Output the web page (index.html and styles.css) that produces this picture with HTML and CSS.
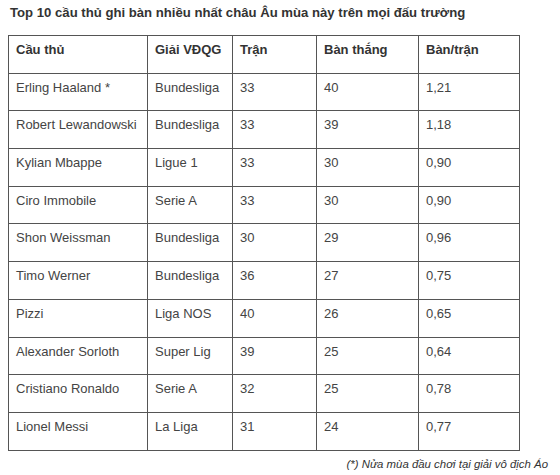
FILE: index.html
```html
<!DOCTYPE html>
<html lang="vi">
<head>
<meta charset="utf-8">
<link rel="stylesheet" href="styles.css">
</head>
<body>
<div class="page">
  <h1 class="title">Top 10 cầu thủ ghi bàn nhiều nhất châu Âu mùa này trên mọi đấu trường</h1>
  <table class="stats">
    <colgroup>
      <col class="c1"><col class="c2"><col class="c3"><col class="c4"><col class="c5">
    </colgroup>
    <thead>
      <tr><th>Cầu thủ</th><th>Giải VĐQG</th><th>Trận</th><th>Bàn thắng</th><th>Bàn/trận</th></tr>
    </thead>
    <tbody>
      <tr><td>Erling Haaland *</td><td>Bundesliga</td><td>33</td><td>40</td><td>1,21</td></tr>
      <tr><td>Robert Lewandowski</td><td>Bundesliga</td><td>33</td><td>39</td><td>1,18</td></tr>
      <tr><td>Kylian Mbappe</td><td>Ligue 1</td><td>33</td><td>30</td><td>0,90</td></tr>
      <tr><td>Ciro Immobile</td><td>Serie A</td><td>33</td><td>30</td><td>0,90</td></tr>
      <tr><td>Shon Weissman</td><td>Bundesliga</td><td>30</td><td>29</td><td>0,96</td></tr>
      <tr><td>Timo Werner</td><td>Bundesliga</td><td>36</td><td>27</td><td>0,75</td></tr>
      <tr><td>Pizzi</td><td>Liga NOS</td><td>40</td><td>26</td><td>0,65</td></tr>
      <tr><td>Alexander Sorloth</td><td>Super Lig</td><td>39</td><td>25</td><td>0,64</td></tr>
      <tr><td>Cristiano Ronaldo</td><td>Serie A</td><td>32</td><td>25</td><td>0,78</td></tr>
      <tr><td>Lionel Messi</td><td>La Liga</td><td>31</td><td>24</td><td>0,77</td></tr>
    </tbody>
  </table>
  <p class="note">(*) Nửa mùa đầu chơi tại giải vô địch Áo</p>
</div>
</body>
</html>
```
FILE: styles.css
```css
html, body {
  margin: 0;
  padding: 0;
  background: #ffffff;
}
.page {
  padding: 4px 12px 0 8px;
  font-family: "Liberation Sans", Arial, sans-serif;
  color: #444444;
}
.title {
  margin: 0 0 0 2px;
  font-size: 13.15px;
  line-height: 18px;
  font-weight: bold;
  color: #333333;
}
.stats {
  margin-top: 13px;
  border-collapse: collapse;
  width: 511px;
  table-layout: fixed;
  font-size: 13px;
}
.c1 { width: 139px; }
.c2 { width: 85px; }
.c3 { width: 84px; }
.c4 { width: 102px; }
.c5 { width: 101px; }
.stats tr {
  height: 37.7px;
}
.stats th,
.stats td {
  border: 1px solid #555555;
  padding: 6px 6px 0 7px;
  vertical-align: top;
  text-align: left;
  line-height: 16px;
  white-space: nowrap;
}
.stats th {
  font-weight: bold;
  color: #333333;
}
.note {
  margin: 6px 0 0 0;
  text-align: right;
  font-size: 11.4px;
  line-height: 14px;
  font-style: italic;
  color: #333333;
}
```
